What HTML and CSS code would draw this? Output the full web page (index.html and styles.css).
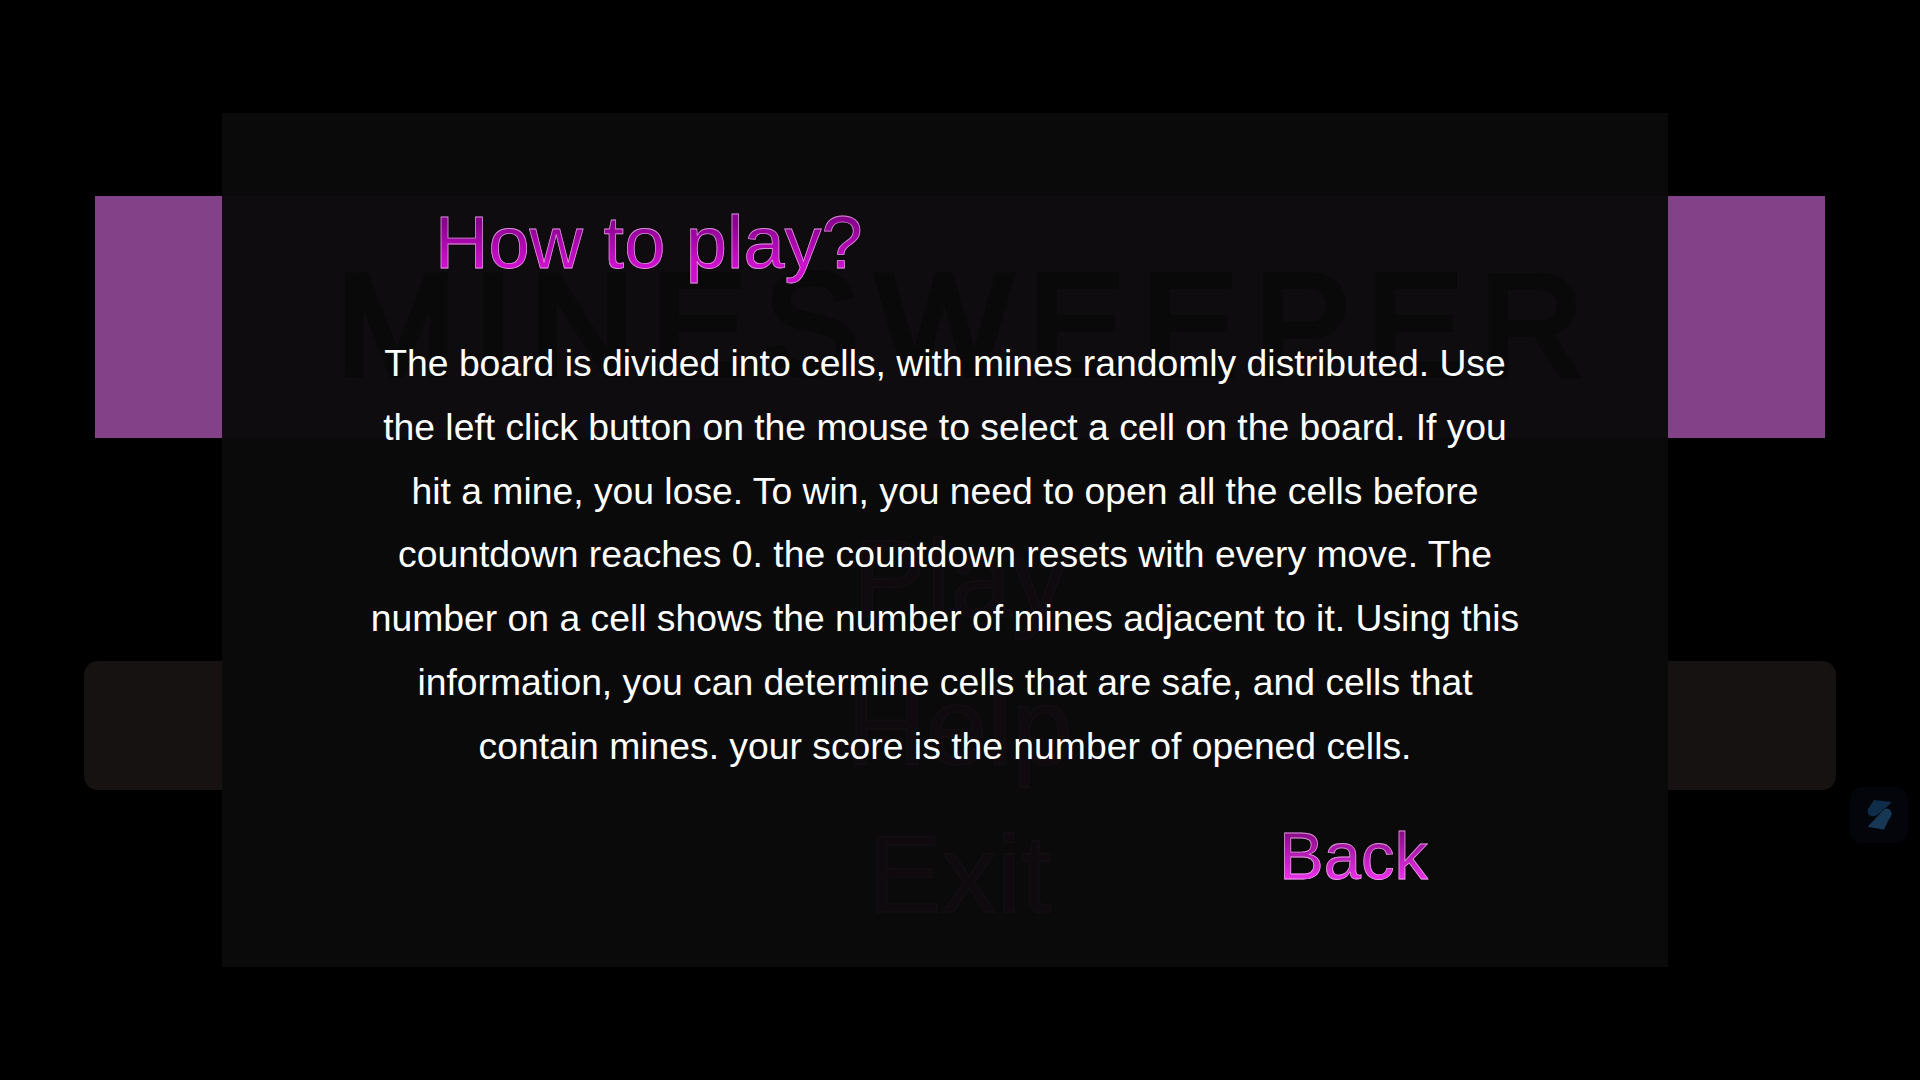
FILE: index.html
```html
<!DOCTYPE html>
<html lang="en-US">
<head>
<meta charset="utf-8">
<title>Minesweeper</title>
<link rel="stylesheet" href="styles.css">
</head>
<body>
<div class="menu">
	<div class="banner"><h1 class="game-title">MINESWEEPER</h1></div>
	<div class="menu-item"><span class="menu-label">Play</span></div>
	<div class="menu-item menu-item-active"><span class="menu-label">Help</span></div>
	<div class="menu-item"><span class="menu-label">Exit</span></div>
</div>

<div class="help-panel">
	<h2 class="help-title">How to play?</h2>
	<p class="help-text">The board is divided into cells, with mines randomly distributed. Use the left click button on the mouse to select a cell on the board. If you hit a mine, you lose. To win, you need to open all the cells before countdown reaches 0. the countdown resets with every move. The number on a cell shows the number of mines adjacent to it. Using this information, you can determine cells that are safe, and cells that contain mines. your score is the number of opened cells.</p>
	<div class="back-row"><a class="back-link">Back</a></div>
</div>

<div class="side-badge">
	<svg width="25" height="30" viewBox="0 0 25 30">
		<path class="slash-top" d="M7 0 L25 2 L13 13 C10 15 7 17 4 16 C1 15 0 12 1 9 Z"/>
		<path class="slash-bottom" d="M17 9 C20 7 25 9 25 14 C25 16 24 17 23 18 L17 30 L0 27 Z"/>
	</svg>
</div>
</body>
</html>
```

FILE: styles.css
```css
* {
	box-sizing: border-box;
}
html, body {
	margin: 0;
	height: 100%;
}
body {
	background-color: #000;
	font-family: "Liberation Sans", Arial, sans-serif;
	overflow: hidden;
}

/* main menu, sits behind the help panel */
.menu {
	padding: 196px 84px 0;
	display: flex;
	flex-direction: column;
	gap: 19px;
}
.banner {
	margin: 0 11px 56px;
	height: 242px;
	background-color: #834188;
	display: flex;
	align-items: center;
	justify-content: center;
	padding: 18px 0 0 17px;
}
/* the labels only just show through the panel, so they get their final
   colours and sit above its background */
.game-title {
	position: relative;
	z-index: 2;
	margin: 0;
	font-size: 144px;
	font-weight: normal;
	line-height: 1;
	letter-spacing: 16.7px;
	color: #0a090a;
	-webkit-text-stroke: 6px #0a090a;
	text-shadow: 0 0 2px #1c1a1c;
}
.menu-item {
	height: 129px;
	border-radius: 14px;
	font-size: 110px;
	line-height: 130px;
	text-align: center;
}
.menu-label {
	position: relative;
	z-index: 2;
	color: #0f0a0e;
	-webkit-text-stroke: 2px #110d10;
}
.menu-item-active {
	background-color: #161211;
}

/* help panel */
.help-panel {
	position: absolute;
	left: 222px;
	top: 113px;
	width: 1446px;
	height: 854px;
	background-color: rgba(10, 10, 10, 0.97);
	padding-top: 88px;
}
.help-title {
	position: relative;
	z-index: 3;
	margin: 0 0 0 213px;
	font-size: 74px;
	font-weight: normal;
	line-height: 84px;
	color: transparent;
	background-image: linear-gradient(#8a008f 25%, #cc10cc 75%);
	-webkit-background-clip: text;
	background-clip: text;
	-webkit-text-stroke: 0.8px rgba(220, 180, 220, 0.8);
	width: max-content;
}
.help-text {
	position: relative;
	z-index: 3;
	margin: 47px auto 0;
	width: 1165px;
	font-size: 37.3px;
	line-height: 63.8px;
	text-align: center;
	color: #fff;
}
.back-row {
	position: relative;
	z-index: 3;
	margin: 39px 0 0 1057px;
}
.back-link {
	display: inline-block;
	font-size: 67px;
	line-height: 76px;
	color: transparent;
	background-image: linear-gradient(#8a0c88 20%, #ea30e8 80%);
	-webkit-background-clip: text;
	background-clip: text;
	-webkit-text-stroke: 0.8px rgba(225, 180, 225, 0.8);
}

/* little floating badge on the right edge */
.side-badge {
	position: absolute;
	left: 1850px;
	top: 787px;
	width: 58px;
	height: 56px;
	border-radius: 12px;
	background-color: #03050a;
	display: flex;
	align-items: center;
	justify-content: center;
}
.slash-top {
	fill: #0f2c4b;
}
.slash-bottom {
	fill: #173755;
	stroke: #03050a;
	stroke-width: 0.6;
}
```
